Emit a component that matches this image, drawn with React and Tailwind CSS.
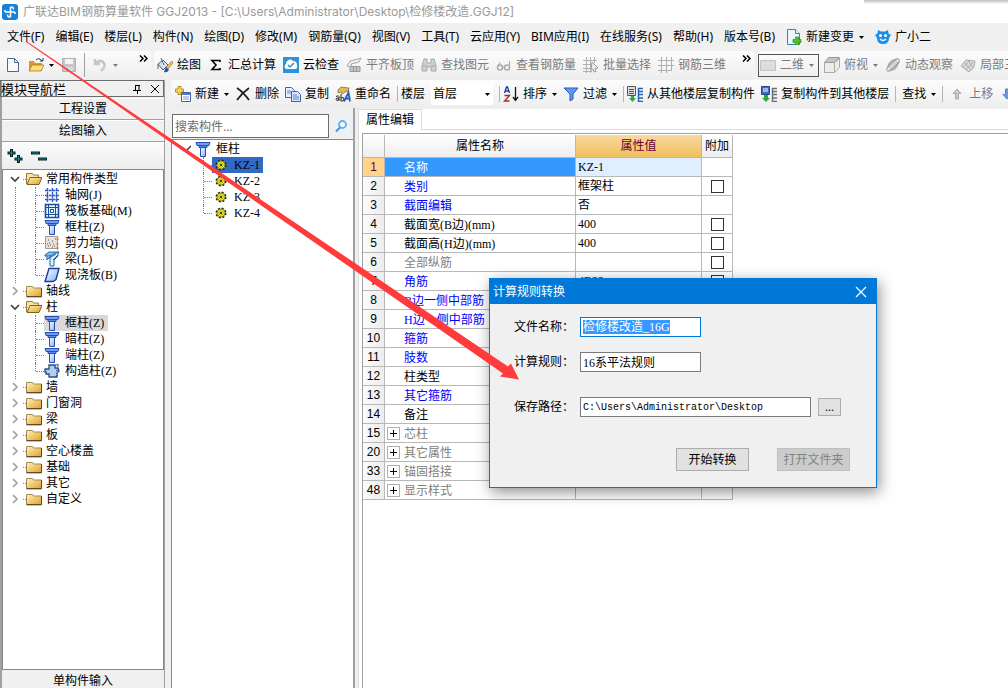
import React, { useState } from 'react'

/**
 * Small 16px icons used by the menus, toolbars and trees.
 */
const drawings = {
    logo: <>
        <rect width="16" height="16" rx="3" fill="#1583dc" />
        <path d="M8.5 3v10M3 8h10M8.5 3q3-.5 3 2.500M8.500 13q-3 .5-3-2.500M3 8V6M13 8v2" fill="none" stroke="#fff" strokeWidth="1.500" />
    </>,
    newFile: <path d="M2.500 1.500h7l4 4v9h-11zM9.500 1.500v4h4" fill="#f6faff" stroke="#49688c" />,
    openFile: <>
        <path d="M1 4h5l1 2h7v8H1z" fill="#d99a2c" />
        <path d="M1 14l3-6h12l-3 6z" fill="#ffdc7a" stroke="#a97a20" strokeWidth=".8" />
        <path d="M8 3q3-3 6 1M15 1v3h-3" fill="none" stroke="#333" />
    </>,
    save: <>
        <path d="M1.500 1.500h13v13h-13z" fill="#c6c6c6" stroke="#b0b0b0" />
        <path d="M4 2h8v5H4z" fill="#f4f4f4" />
        <path d="M4 10h8v4H4z" fill="#ddd" />
        <path d="M5 11h2v3H5z" fill="#999" />
    </>,
    undo: <path d="M3 2v5h5M3 7q5-5 8-2 4 4-2 9" fill="none" stroke="#c6c6c6" strokeWidth="2.500" />,
    paint: <>
        <path d="M1 7l5-4 5 5-5 5z" fill="#d8e4f2" stroke="#4a6380" />
        <path d="M4 1l3 7M1 7v5" stroke="#4a6380" fill="none" />
        <path d="M15 4l-6 6 2 2 5-6z" fill="#f3c24b" stroke="#8d6a22" strokeWidth=".6" />
        <path d="M9 10l3 3q-2 3-5 2 1-3 2-5z" fill="#284eb3" />
    </>,
    sum: <path d="M12 5V3.500H4L8 8l-4 4.500h8V11" fill="none" stroke="#000" strokeWidth="1.600" />,
    cloud: <>
        <path d="M0 0h16v16H0z" fill="#2b93dc" />
        <path d="M3 12a3 3 0 0 1 0-5 4 4 0 0 1 7-3 4 4 0 0 1 4 4q1 4-2 4z" fill="#fff" />
        <path d="M5 8l2 2 4-4" fill="none" stroke="#2b93dc" strokeWidth="1.500" />
    </>,
    align: <>
        <path d="M1 9l3-5 8-2 3-1-2 4-8 2 1 3z" fill="#eee" stroke="#aaa" />
        <path d="M4 9.500h10v5H4zM7.500 10v5M10.500 10v5" fill="#c4c4c4" stroke="#999" />
    </>,
    binoculars: <path d="M3 2h3v4h4V2h3l2 7v5h-5v-4H6v4H1V9zM1.500 9h5M9.500 9h5" fill="#cfcfcf" stroke="#a8a8a8" />,
    glasses: <>
        <circle cx="4" cy="10.500" r="2.500" fill="none" stroke="#aaa" strokeWidth="1.500" />
        <circle cx="11" cy="10.500" r="2.500" fill="none" stroke="#aaa" strokeWidth="1.500" />
        <path d="M6.500 10h2M1.500 9l3-4M13.500 10V4" fill="none" stroke="#aaa" />
    </>,
    batch: <>
        <path d="M3.500 0v16M0 3.500h14M7.500 0v16M0 7.500h9M11.500 0v6M0 11.500h9M0 14.500h9" fill="none" stroke="#b0b0b0" />
        <path d="M9 5l6 6-3 .5 1 3-2 .5-1-3-2 1z" fill="#eee" stroke="#999" />
    </>,
    grid3d: <path d="M3.500 0v16M0 3.500h16M8.500 0v16M0 8.500h16M13.500 0v13M0 13.500h14" fill="none" stroke="#b0b0b0" />,
    flat: <path d="M.5 3.500h15v10H.5z" fill="#ddd" stroke="#c2c2c2" />,
    cube: <>
        <path d="M.5 5.500h10v10H.5zM10.500 5.500l5-4v9l-5 5z" fill="#ececec" stroke="#aaa" />
        <path d="M.5 5.500l4-5h11l-5 5z" fill="#c4c4c4" stroke="#999" />
    </>,
    orbit: <>
        <ellipse cx="8" cy="8" rx="5" ry="6" fill="#c4c4c4" transform="rotate(30 8 8)" />
        <ellipse cx="8" cy="8" rx="8" ry="3" fill="none" stroke="#999" strokeWidth="1.200" transform="rotate(-45 8 8)" />
        <path d="M2 13L14 3" stroke="#eee" />
    </>,
    local3d: <path d="M1 9l5-6 9 1-1 6-5 5zM4 5l7 8M8 3l5 8M3 11l6-7M6 13l7-8" fill="#ddd" stroke="#aaa" />,
    create: <>
        <path d="M6.500 6.500h9v9h-9z" fill="#fff" stroke="#46639b" />
        <path d="M7 7h8v2H7z" fill="#4c7ed0" />
        <path d="M8 11h6M8 13h6" stroke="#7c9cd0" />
        <path d="M3 .5h3v2.500h2.500v3H6v2.500H3V6H.5V3H3z" fill="#ffd84a" stroke="#a37a14" strokeWidth=".8" />
    </>,
    remove: <path d="M2 2q6 4 12 12M14 2Q7 7 2 14" fill="none" stroke="#222" strokeWidth="1.800" />,
    copy: <>
        <path d="M.5 1.500h6l3 3v7h-9z" fill="#e8f1ff" stroke="#3a62a8" />
        <path d="M6.500 5.500h6l3 3v7h-9z" fill="#d9e8ff" stroke="#3a62a8" />
        <path d="M2 5h4M2 7h4M8 9h4M8 11h6M8 13h6" stroke="#5a84c8" />
    </>,
    rename: <>
        <path d="M3 4l3-3 8 1-1 3-3 1-3 2-1-2-3 1z" fill="#e2bc52" stroke="#7d6420" strokeWidth=".7" />
        <path d="M1 10.500q3-1.500 3 0v4.500M4 12q-3-.5-3 1.500t3 0M6 8v7q3 .5 3-2t-3-1" fill="none" stroke="#222" />
        <path d="M9 15.500l4.500-9 1.500 9M10.500 12.500h5" fill="none" stroke="#2a5ec4" strokeWidth="1.800" />
    </>,
    sort: <>
        <path d="M1.500 7l2-6h1l2 6M2 5h4" fill="none" stroke="#1c3fa8" strokeWidth="1.300" />
        <path d="M1.500 9.500h5l-5 5.500h5" fill="none" stroke="#a52a2a" strokeWidth="1.300" />
        <path d="M12.500 1v13M10 11l2.500 3.500L15 11" fill="none" stroke="#111" strokeWidth="1.300" />
    </>,
    filter: <path d="M1 2h14l-5 6v5l-3 2V8z" fill="#5a9bf0" stroke="#2858b8" />,
    fromFloor: <>
        <path d="M.5.5h8v9h-8zM2 3.500h5M2 5.500h5M2 7.500h5" fill="#ddd" stroke="#555" />
        <path d="M16 2.500h-4.500v13H16M11.500 5.500H16M11.500 8.500H16M11.500 12H16" fill="none" stroke="#1f66b8" strokeWidth="1.500" />
        <path d="M4 10v2H2l3.500 4L9 12H7v-2z" fill="#2da648" />
    </>,
    toFloor: <>
        <path d="M.5.5h8v8h-8z" fill="#3d6fc6" stroke="#24458a" />
        <path d="M2 3h5M2 5h5" stroke="#fff" />
        <path d="M16 2.500h-4.500v13H16M11.500 5.500H16M11.500 8.500H16M11.500 12H16" fill="none" stroke="#687078" strokeWidth="1.500" />
        <path d="M3 9v3H1l4 4 4-4H7V9z" fill="#2da648" />
    </>,
    up: <path d="M8 3l4 4.500H9.500V13h-3V7.500H4z" fill="#c8c8c8" stroke="#aaa" />,
    down: <path d="M8 13l4-4.500H9.500V3h-3v5.500H4z" fill="#6f9ae0" stroke="#5580c8" />,
    change: <>
        <path d="M1.500 .5h8l4 4v11h-12z" fill="#e9f6ff" stroke="#2f82c0" />
        <path d="M9.500.5v4h4" fill="#fff" stroke="#2f82c0" />
        <path d="M9.500 8h3v2.500H15v3h-2.500V16h-3v-2.500H7v-3h2.500z" fill="#4fc21e" stroke="#258009" strokeWidth=".6" />
    </>,
    mascot: <>
        <path d="M3 1l3 1.500h4L13 1l.5 3.500L16 6l-2 3q0 6-6 6t-6-6L0 6l2.500-1.500z" fill="#1a8fe8" />
        <circle cx="5.500" cy="6.500" r="1.500" fill="#fff" />
        <circle cx="10.500" cy="6.500" r="1.500" fill="#fff" />
        <path d="M5 10q3 3 6 0" fill="none" stroke="#fff" strokeWidth="1.300" />
    </>,
    folder: <>
        <path d="M.5 3.500h6l1 1.500h8v9h-15z" fill="url(#gold)" stroke="#a08a58" />
        <path d="M1 13.500h14.500V5" fill="none" stroke="#5f4a20" />
    </>,
    folderOpen: <>
        <path d="M.5 13V2.500h6l1 1.500h5v3" fill="#f8e3a0" stroke="#9a7c38" />
        <path d="M1 13.500L4 6.500h12l-3 7z" fill="url(#gold)" stroke="#7d6226" />
    </>,
    axis: <path d="M3.500 1v14M8.500 1v14M12.500 1v14M1 3.500h14M1 8.500h14M1 12.500h14" fill="none" stroke="#2c5cc0" strokeWidth="1.400" strokeDasharray="3 .7" />,
    raft: <>
        <path d="M1.500 1.500h13v13h-13z" fill="#eaf2fc" stroke="#12509c" strokeWidth="1.600" />
        <path d="M4.500 2v12M11.500 2v12M2 4.500h12M2 11.500h12" stroke="#12509c" />
        <path d="M6.500 6.500h3v3h-3z" fill="#fff" stroke="#12509c" />
    </>,
    column: <>
        <path d="M1 1.500h14l-1 3H2z" fill="#6f9cf4" stroke="#2c4db0" />
        <path d="M4 4.500h8v2H4z" fill="#5b88e8" stroke="#2c4db0" />
        <path d="M5.500 6.500h5v9h-5z" fill="url(#steel)" stroke="#2c4db0" />
    </>,
    shear: <>
        <path d="M1.500 1.500h12v12h-12z" fill="#e6e2de" stroke="#a99a90" />
        <path d="M4 5h1M8 6h1M5 8h1M9 9h1M4 11h1M8 12h1M11 4h1M6 10h1M10 11h1M3 9h1" stroke="#555" />
        <path d="M13.500 1v14M12 4h3M12 9h3M12 13h3" stroke="#e0862c" />
    </>,
    beam: <>
        <path d="M1 4l4-3h10l-3 4H1z" fill="#7cc4f4" stroke="#2269a8" />
        <path d="M6 5l8-4v4l-4 4v6H6z" fill="#d8f0ff" stroke="#2269a8" />
        <path d="M2 9l10-6M3 5v3l3-2M9 9l5-5" stroke="#2269a8" fill="none" />
    </>,
    slab: <path d="M5 1.500h10l-3 11-3 2H1z" fill="url(#steel)" stroke="#1c3d9c" strokeWidth="1.400" />,
    tie: <>
        <path d="M5 2h6v3h3l1 3-2 2v4H5v-3H2V9H1V6h4z" fill="#b5cdf2" stroke="#2b4c88" strokeWidth="1.300" />
        <path d="M11 3l3-2v3M12 8l3-2M12 14l2-2" stroke="#2b4c88" fill="none" />
    </>,
    gear: <>
        <circle cx="8" cy="8" r="4.500" fill="#f4f020" stroke="#222" strokeWidth="2" strokeDasharray="2 1.530" />
        <circle cx="8" cy="8" r="4" fill="#f4f020" stroke="#555520" strokeWidth=".6" />
        <path d="M8 4v8M4 8h8M5 5l6 6M11 5l-6 6" stroke="#77771a" strokeWidth=".5" />
        <circle cx="8" cy="8" r="1" fill="#222" />
    </>,
    search: <>
        <path d="M0 1h16v14H0z" fill="#e8f3fc" />
        <circle cx="9.500" cy="6.500" r="3.500" fill="#f6fbff" stroke="#62aee8" strokeWidth="1.800" />
        <path d="M7 9.500L3 13.500" stroke="#4a94d8" strokeWidth="2" />
    </>,
}

function Icon({ name }) {
    return <svg className="size-4 shrink-0" viewBox="0 0 16 16" aria-hidden="true">{drawings[name]}</svg>
}

function Caret() {
    return <svg className="w-[5px] h-[3px] shrink-0 ml-px" viewBox="0 0 5 3" aria-hidden="true"><path d="M0 0h5L2.500 3z" fill="currentColor" /></svg>
}

/**
 * Toolbar button with an optional icon, label and drop down arrow.
 */
function Tool({ icon, label, caret, disabled, title }) {
    return (
        <button type="button" title={title} aria-label={label || title} disabled={disabled} className="flex shrink-0 items-center gap-1 text-black disabled:text-[#7b7b7b]">
            {icon && <Icon name={icon} />}
            {label && <span>{label}</span>}
            {caret && <Caret />}
        </button>
    )
}

function Divider({ tight }) {
    return <span className={tight ? '-mr-[3px] h-4 w-px shrink-0 bg-[#b4b4b4]' : 'h-4 w-px shrink-0 bg-[#b4b4b4]'} />
}

function More() {
    return (
        <button type="button" aria-label="更多" className="self-start pt-[2px]">
            <svg className="w-[9px] h-[7px]" viewBox="0 0 9 7"><path d="M1 .5l3 3-3 3M5 .5l3 3-3 3" fill="none" stroke="#000" strokeWidth="1.500" /></svg>
        </button>
    )
}

const menus = ['文件(F)', '编辑(E)', '楼层(L)', '构件(N)', '绘图(D)', '修改(M)', '钢筋量(Q)', '视图(V)', '工具(T)', '云应用(Y)', 'BIM应用(I)', '在线服务(S)', '帮助(H)', '版本号(B)']

const modules = [
    { name: '常用构件类型', children: [['axis', '轴网(J)'], ['raft', '筏板基础(M)'], ['column', '框柱(Z)'], ['shear', '剪力墙(Q)'], ['beam', '梁(L)'], ['slab', '现浇板(B)']] },
    { name: '轴线' },
    { name: '柱', selected: 0, children: [['column', '框柱(Z)'], ['column', '暗柱(Z)'], ['column', '端柱(Z)'], ['tie', '构造柱(Z)']] },
    { name: '墙' },
    { name: '门窗洞' },
    { name: '梁' },
    { name: '板' },
    { name: '空心楼盖' },
    { name: '基础' },
    { name: '其它' },
    { name: '自定义' },
]

const properties = [
    { id: 1, name: '名称', value: 'KZ-1', color: 'text-white' },
    { id: 2, name: '类别', value: '框架柱', color: 'text-[#0000ff]', check: true },
    { id: 3, name: '截面编辑', value: '否', color: 'text-[#0000ff]' },
    { id: 4, name: '截面宽(B边)(mm)', value: '400', color: 'text-black', check: true },
    { id: 5, name: '截面高(H边)(mm)', value: '400', color: 'text-black', check: true },
    { id: 6, name: '全部纵筋', value: '', color: 'text-[#808080]', check: true },
    { id: 7, name: '角筋', value: '4B22', color: 'text-[#0000ff]', check: true },
    { id: 8, name: 'B边一侧中部筋', color: 'text-[#0000ff]' },
    { id: 9, name: 'H边一侧中部筋', color: 'text-[#0000ff]' },
    { id: 10, name: '箍筋', color: 'text-[#0000ff]' },
    { id: 11, name: '肢数', color: 'text-[#0000ff]' },
    { id: 12, name: '柱类型', color: 'text-black' },
    { id: 13, name: '其它箍筋', color: 'text-[#0000ff]' },
    { id: 14, name: '备注', color: 'text-black' },
    { id: 15, name: '芯柱', color: 'text-[#808080]', group: true },
    { id: 20, name: '其它属性', color: 'text-[#808080]', group: true },
    { id: 33, name: '锚固搭接', color: 'text-[#808080]', group: true },
    { id: 48, name: '显示样式', color: 'text-[#808080]', group: true },
]

/**
 * One top level entry of the module tree, with its children when open.
 */
function ModuleNode({ node }) {
    const [open, setOpen] = useState(!!node.children)

    return (
        <li>
            <button type="button" onClick={() => setOpen(!open)} className="flex h-4 items-center whitespace-nowrap">
                <svg className="mr-[3px] size-[10px]" viewBox="0 0 10 10" aria-hidden="true">
                    {open
                        ? <path d="M1 3l4 4 4-4" fill="none" stroke="#404040" strokeWidth="1.700" />
                        : <path d="M3 1l4 4-4 4" fill="none" stroke="#a0a0a0" strokeWidth="1.700" />}
                </svg>
                <span className="w-[3px] border-t border-dotted border-[#808080]" />
                <Icon name={open ? 'folderOpen' : 'folder'} />
                <span className="ml-1">{node.name}</span>
            </button>
            {open && node.children && (
                <div className="ml-[5px] border-l border-dotted border-[#808080] pl-[19px]">
                    <ul>
                        {node.children.map(([icon, label], index) => (
                            <li key={index} className="group flex h-4 whitespace-nowrap">
                                <span className="h-full border-l border-dotted border-[#808080] group-last:h-2" />
                                <span className="mt-2 w-[8px] border-t border-dotted border-[#808080]" />
                                <button type="button" className={node.selected === index ? 'flex items-center gap-[5px] bg-[#d9d9d9] pr-1' : 'flex items-center gap-[5px]'}>
                                    <Icon name={icon} />
                                    {label}
                                </button>
                            </li>
                        ))}
                    </ul>
                </div>
            )}
        </li>
    )
}

function TitleBar() {
    return (
        <header className="relative flex h-[23px] shrink-0 items-center gap-[5px] bg-white pl-[2px] font-['Inter','Noto_Sans_CJK_SC',sans-serif] text-[#999999]">
            <Icon name="logo" />
            <h1 className="whitespace-nowrap text-[12px]">广联达BIM钢筋算量软件 GGJ2013 - [C:\Users\Administrator\Desktop\检修楼改造.GGJ12]</h1>
            <span className="absolute right-0 top-0 h-1 w-[144px] bg-linear-to-b from-[#bdbdbd] to-white" />
        </header>
    )
}

function MenuBar() {
    return (
        <nav className="flex h-7 shrink-0 items-center gap-[11px] overflow-hidden whitespace-nowrap bg-[#f0f0f0] pl-[7px] font-['Noto_Sans','Noto_Sans_CJK_SC',sans-serif]">
            {menus.map(menu => <button key={menu} type="button">{menu}</button>)}
            <Tool icon="change" label="新建变更" caret />
            <Tool icon="mascot" label="广小二" />
        </nav>
    )
}

function MainToolbar() {
    return (
        <div className="flex h-[29px] shrink-0 gap-[3px] overflow-hidden whitespace-nowrap bg-[#f0f0f0]">
            <div className="flex w-[151px] shrink-0 items-center gap-[7px] rounded-r bg-linear-to-b from-[#fcfcfc] to-[#ededed] pl-[5px] pr-[3px] pb-[3px] pt-[2px]">
                <Tool icon="newFile" title="新建" />
                <Tool icon="openFile" title="打开" caret />
                <Tool icon="save" title="保存" disabled />
                <span className="h-6 w-px bg-[#a0a0a0]" />
                <Tool icon="undo" title="撤销" caret disabled />
                <span className="flex-1" />
                <More />
            </div>
            <div className="flex w-[600px] shrink-0 items-center gap-[7px] rounded bg-linear-to-b from-[#fcfcfc] to-[#ededed] pl-[3px] pr-[3px] pb-[3px] pt-[2px]">
                <Tool icon="paint" label="绘图" />
                <Tool icon="sum" label="汇总计算" />
                <Tool icon="cloud" label="云检查" />
                <Tool icon="align" label="平齐板顶" disabled />
                <Tool icon="binoculars" label="查找图元" disabled />
                <Tool icon="glasses" label="查看钢筋量" disabled />
                <Tool icon="batch" label="批量选择" disabled />
                <Tool icon="grid3d" label="钢筋三维" disabled />
                <span className="flex-1" />
                <More />
            </div>
            <div className="flex flex-1 items-center gap-[7px] rounded-l bg-linear-to-b from-[#fcfcfc] to-[#ededed] pl-px pb-[3px] pt-[2px]">
                <div className="-mr-[2px] flex h-[23px] shrink-0 items-center border border-[#555] pl-px pr-1">
                    <Tool icon="flat" label="二维" caret disabled />
                </div>
                <Tool icon="cube" label="俯视" caret disabled />
                <Tool icon="orbit" label="动态观察" disabled />
                <Tool icon="local3d" label="局部三维" disabled />
            </div>
        </div>
    )
}

function ModulePanel() {
    return (
        <aside className="flex w-[165px] shrink-0 flex-col border-l-2 border-r border-[#a0a0a0] bg-[#f0f0f0]">
            <div className="-ml-[2px] mb-px flex h-[17px] shrink-0 items-center justify-between border border-[#6b6b6b] pr-[3px]">
                <h2 className="text-[13px]">模块导航栏</h2>
                <span className="flex gap-2">
                    <button type="button" aria-label="固定">
                        <svg className="size-[10px]" viewBox="0 0 10 10"><path d="M3 1.500h5M3.500 1v5M1 6.500h8M5.500 6v4M7 1v5" fill="none" stroke="#000" /></svg>
                    </button>
                    <button type="button" aria-label="关闭">
                        <svg className="size-[10px]" viewBox="0 0 10 10"><path d="M1 1l8 8M9 1L1 9" stroke="#000" /></svg>
                    </button>
                </span>
            </div>
            <button type="button" className="h-[22px] shrink-0 border-b border-t border-b-[#a0a0a0] border-t-white">工程设置</button>
            <button type="button" className="h-[22px] shrink-0 border-b border-t border-b-[#a0a0a0] border-t-white">绘图输入</button>
            <div className="flex h-[27px] shrink-0 items-center gap-2 bg-linear-to-b from-[#fcfcfc] to-[#ededed] pl-[5px]">
                <button type="button" aria-label="全部展开">
                    <svg className="size-4" viewBox="0 0 16 16"><path d="M4.500 1v8M.5 5h8M11.500 7v8M7.500 11h8" stroke="#002222" strokeWidth="3" /><path d="M4.500 2v6M1.500 5h6M11.500 8v6M8.500 11h6" stroke="#1b8585" /></svg>
                </button>
                <button type="button" aria-label="全部折叠">
                    <svg className="size-4" viewBox="0 0 16 16"><path d="M0 5h9M7 11h9" stroke="#002222" strokeWidth="3" /><path d="M1 5h7M8 11h7" stroke="#1b8585" /></svg>
                </button>
            </div>
            <ul className="min-h-0 flex-1 overflow-hidden border border-[#828790] bg-white pl-[7px] pt-px font-['Liberation_Serif','Noto_Sans_CJK_SC',serif]">
                {modules.map(node => <ModuleNode key={node.name} node={node} />)}
            </ul>
            <button type="button" className="h-[18px] shrink-0 pt-1 leading-[14px]">单构件输入</button>
        </aside>
    )
}

function ComponentToolbar() {
    return (
        <div className="flex h-7 shrink-0 items-center gap-[6px] overflow-hidden whitespace-nowrap rounded-l bg-linear-to-b from-[#fcfcfc] to-[#ededed] pl-1">
            <Tool icon="create" label="新建" caret />
            <Tool icon="remove" label="删除" />
            <Tool icon="copy" label="复制" />
            <Tool icon="rename" label="重命名" />
            <Divider tight />
            <div className="flex shrink-0 items-center gap-[6px]">
                <label htmlFor="floor">楼层</label>
                <div className="flex items-center bg-white pr-[3px]">
                    <select id="floor" className="h-[22px] w-[53px] appearance-none pl-[2px] outline-none">
                        <option>首层</option>
                    </select>
                    <Caret />
                </div>
            </div>
            <Divider tight />
            <Tool icon="sort" label="排序" caret />
            <Tool icon="filter" label="过滤" caret />
            <Divider tight />
            <Tool icon="fromFloor" label="从其他楼层复制构件" />
            <Tool icon="toFloor" label="复制构件到其他楼层" />
            <Divider />
            <Tool label="查找" caret />
            <Divider />
            <Tool icon="up" label="上移" disabled />
            <Tool icon="down" title="下移" disabled />
        </div>
    )
}

function ComponentPanel() {
    const [selected, setSelected] = useState('KZ-1')

    return (
        <section className="flex w-[184px] shrink-0 flex-col border-r-2 border-[#a0a0a0]">
            <div className="flex shrink-0 items-center gap-1 pb-px pl-px pt-[6px]">
                <input aria-label="搜索构件" placeholder="搜索构件..." className="h-6 w-[157px] border border-[#6e6e6e] bg-white px-[2px] placeholder:text-[#6d6d6d]" />
                <button type="button" aria-label="搜索"><Icon name="search" /></button>
            </div>
            <div className="flex-1 border-l border-t border-[#828790] bg-white pl-[11px] pt-px font-['Liberation_Serif','Noto_Sans_CJK_SC',serif]">
                <div className="flex h-4 items-center">
                    <svg className="size-2 shrink-0" viewBox="0 0 8 8" aria-hidden="true"><path d="M0 3l3 3 5-5" fill="none" stroke="#404040" strokeWidth="1.500" /></svg>
                    <span className="w-1" />
                    <Icon name="column" />
                    <span className="ml-[5px]">框柱</span>
                </div>
                <ul className="pl-5">
                    {['KZ-1', 'KZ-2', 'KZ-3', 'KZ-4'].map(name => (
                        <li key={name} className="group flex h-4">
                            <span className="h-full border-l border-dotted border-[#808080] group-last:h-2" />
                            <span className="mt-2 w-[8px] border-t border-dotted border-[#808080]" />
                            <button type="button" onClick={() => setSelected(name)} className={selected === name ? 'flex items-center gap-[5px] bg-[#316ac5] pl-px pr-[3px]' : 'flex items-center gap-[5px] pl-px'}>
                                <Icon name="gear" />
                                {name}
                            </button>
                        </li>
                    ))}
                </ul>
            </div>
        </section>
    )
}

function PropertyTable() {
    return (
        <table className="w-[370px] table-fixed border-separate border-spacing-0 font-['Liberation_Serif','Noto_Sans_CJK_SC',serif]">
            <colgroup>
                <col className="w-[22px]" />
                <col className="w-[191px]" />
                <col className="w-[126px]" />
                <col className="w-[31px]" />
            </colgroup>
            <thead>
                <tr className="h-[23px] bg-linear-to-b from-white to-[#ececec]">
                    <th className="border-b border-r border-[#b8b8b8] p-0" />
                    <th className="border-b border-r border-[#b8b8b8] p-0 font-normal">属性名称</th>
                    <th className="border-b border-r border-[#b8b8b8] bg-linear-to-b from-[#f9d99f] to-[#f0bf5c] p-0 font-normal text-[#660033]">属性值</th>
                    <th className="border-b border-r border-[#b8b8b8] p-0 font-normal">附加</th>
                </tr>
            </thead>
            <tbody>
                {properties.map(row => (
                    <tr key={row.id} className="h-[19px] leading-[16px]">
                        <td className={`border-b border-r border-[#b8b8b8] p-0 text-center font-['Liberation_Sans',sans-serif] ${row.id === 1 ? 'bg-[#ffd48a] text-[#660033]' : 'bg-linear-to-r from-[#fcfcfc] to-[#ececec]'}`}>{row.id}</td>
                        <td className={`border-b border-r border-[#b8b8b8] p-0 ${row.color} ${row.id === 1 ? 'bg-[#3399ff]' : 'bg-white'}`}>
                            <div className="flex items-center pl-[2px] pt-px">
                                <span className="flex w-[17px] shrink-0">
                                    {row.group && (
                                        <button type="button" aria-label={`展开${row.name}`} className="flex size-[13px] items-center justify-center border border-[#b0b0b0]">
                                            <svg className="size-[7px]" viewBox="0 0 7 7"><path d="M3.500 0v7M0 3.500h7" stroke="#000" /></svg>
                                        </button>
                                    )}
                                </span>
                                <span>{row.name}</span>
                            </div>
                        </td>
                        <td className={`border-b border-r border-[#b8b8b8] p-0 pl-[2px] ${row.id === 1 ? 'bg-[#e0efff]' : 'bg-white'}`}>{row.value}</td>
                        <td className="border-b border-r border-[#b8b8b8] p-0">
                            {row.check && <input type="checkbox" aria-label={`附加${row.name}`} className="mx-auto block size-[13px] appearance-none border border-[#333] bg-white" />}
                        </td>
                    </tr>
                ))}
            </tbody>
        </table>
    )
}

/**
 * Dialog for converting the file to the 16G calculation rules.
 */
function ConvertDialog() {
    return (
        <div role="dialog" aria-label="计算规则转换" className="absolute left-[489px] top-[278px] w-[388px] border border-[#0078d7] bg-[#f0f0f0] shadow-[2px_4px_14px_rgba(0,0,0,0.45)]">
            <div className="flex h-[25px] items-center justify-between bg-[#0078d7] pl-[3px] pr-[9px] text-white">
                <h2>计算规则转换</h2>
                <button type="button" aria-label="关闭">
                    <svg className="size-3" viewBox="0 0 12 12"><path d="M1 1l10 10M11 1L1 11" stroke="#fff" strokeWidth="1.200" /></svg>
                </button>
            </div>
            <form className="px-6 pb-4 pt-[13px] font-['Liberation_Serif','Noto_Sans_CJK_SC',serif]" onSubmit={e => e.preventDefault()}>
                <div className="flex items-center">
                    <label htmlFor="fileName" className="w-[66px]">文件名称：</label>
                    <div className="flex h-5 w-[121px] items-center border border-[#0078d7] bg-white pl-[2px]">
                        <input id="fileName" defaultValue="检修楼改造_16G" className="h-[14px] w-[87px] bg-[#3399ff] text-white outline-none" />
                    </div>
                </div>
                <div className="mt-[15px] flex items-center">
                    <label htmlFor="rule" className="w-[66px]">计算规则：</label>
                    <input id="rule" defaultValue="16系平法规则" className="h-5 w-[121px] border border-[#7a7a7a] bg-white px-[2px]" />
                </div>
                <div className="mt-[25px] flex items-center">
                    <label htmlFor="path" className="w-[66px]">保存路径：</label>
                    <input id="path" defaultValue="C:\Users\Administrator\Desktop" className="h-5 w-[231px] border border-[#7a7a7a] bg-white px-[2px] font-['Liberation_Mono',monospace] text-[10px]" />
                    <button type="button" aria-label="浏览" className="ml-[7px] h-[18px] w-[23px] border border-[#adadad] bg-[#e1e1e1] leading-[14px]">...</button>
                </div>
                <div className="mt-[31px] flex justify-end gap-7 pr-[2px]">
                    <button type="submit" className="h-[23px] w-[73px] border border-[#adadad] bg-[#e1e1e1]">开始转换</button>
                    <button type="button" disabled className="h-[23px] w-[73px] border border-[#bfbfbf] bg-[#cccccc] text-[#838383]">打开文件夹</button>
                </div>
            </form>
        </div>
    )
}

function App() {
    return (
        <div className="relative flex h-screen flex-col overflow-hidden bg-[#f0f0f0] font-['Open_Sans','Noto_Sans_CJK_SC',sans-serif] text-[12px] leading-[16px] text-black">
            <svg className="absolute size-0" aria-hidden="true">
                <defs>
                    <linearGradient id="gold" x1="0" y1="0" x2="1" y2="1"><stop offset="0" stopColor="#fff3b8" /><stop offset="1" stopColor="#e0a028" /></linearGradient>
                    <linearGradient id="steel" x1="0" y1="0" x2="1" y2="1"><stop offset="0" stopColor="#ffffff" /><stop offset="1" stopColor="#7fb0f8" /></linearGradient>
                </defs>
            </svg>
            <TitleBar />
            <MenuBar />
            <MainToolbar />
            <div className="flex min-h-0 flex-1 gap-[6px]">
                <ModulePanel />
                <main className="flex min-w-0 flex-1 flex-col">
                    <ComponentToolbar />
                    <div className="flex min-h-0 flex-1 gap-[3px]">
                        <ComponentPanel />
                        <section className="flex min-w-0 flex-1 flex-col border-l border-[#dcdcdc] bg-white">
                            <div className="flex shrink-0 bg-[#f0f0f0] pt-px">
                                <h2 className="h-[21px] w-[63px] border-r border-t border-[#dcdcdc] bg-white pl-[7px] pt-[2px]">属性编辑</h2>
                                <span className="flex-1 border-b border-[#dcdcdc] bg-white" />
                            </div>
                            <div className="ml-[3px] mt-[3px] flex-1 border-l border-t border-[#a0a0a0] pt-px">
                                <PropertyTable />
                            </div>
                        </section>
                    </div>
                </main>
            </div>
            <ConvertDialog />
            <svg className="pointer-events-none absolute left-0 top-0 h-[400px] w-[540px]" viewBox="0 0 540 400" aria-hidden="true">
                <path d="M26 42l1-.5 481 325 3-3 8 16-19-3 3-3z" fill="#ff3b3b" />
            </svg>
        </div>
    )
}

export default App
